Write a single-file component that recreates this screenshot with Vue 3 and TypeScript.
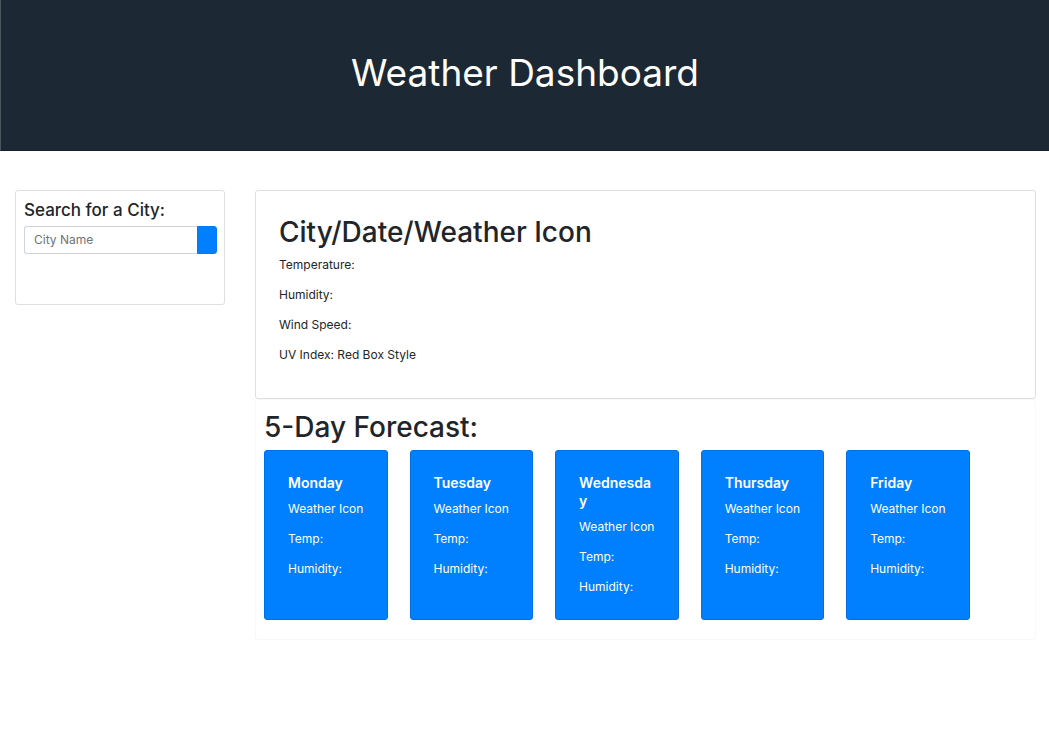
<script setup lang="ts">
import { ref } from 'vue'

const city = ref<string>('')
const days: string[] = ['Monday', 'Tuesday', 'Wednesday', 'Thursday', 'Friday']
const current: string[] = ['Temperature:', 'Humidity:', 'Wind Speed:', 'UV Index: Red Box Style']
const details: string[] = ['Weather Icon', 'Temp:', 'Humidity:']
</script>

<template>
  <div class="page">
    <header class="banner">
      <h1>Weather Dashboard</h1>
    </header>
    <div class="layout">
      <aside class="search">
        <form @submit.prevent>
          <label for="city">Search for a City:</label>
          <div class="field">
            <input id="city" v-model="city" type="text" placeholder="City Name" />
            <button type="submit" aria-label="Search"></button>
          </div>
        </form>
      </aside>
      <main class="main">
        <section class="current">
          <h2>City/Date/Weather Icon</h2>
          <p v-for="line in current" :key="line">{{ line }}</p>
        </section>
        <section class="forecast">
          <h2>5-Day Forecast:</h2>
          <div class="days">
            <article v-for="day in days" :key="day" class="day">
              <h3>{{ day }}</h3>
              <p v-for="item in details" :key="item">{{ item }}</p>
            </article>
          </div>
        </section>
      </main>
    </div>
  </div>
</template>

<style>
body {
  margin: 0;
  background: #fff;
}
</style>

<style scoped>
.page,
.page * {
  box-sizing: border-box;
}
.page {
  font-family: Inter, "Liberation Sans", sans-serif;
  font-size: 12px;
  line-height: 18px;
  color: #212529;
}
.banner {
  padding: 46px 24px 50px;
  background: #1c2833;
  border-left: 1px solid #4a555e;
  border-bottom: 1px solid #18202d;
  color: #fff;
  text-align: center;
}
h1 {
  margin: 0;
  font-size: 37px;
  line-height: 54px;
  font-weight: 400;
}
.layout {
  display: grid;
  grid-template-columns: minmax(0, 210fr) minmax(0, 781fr);
  gap: 30px;
  align-items: start;
  padding: 39px 13px 0 15px;
}
.search {
  min-height: 115px;
  padding: 8px 7px 8px 8px;
  border: 1px solid #dfdfdf;
  border-radius: 3px;
}
.search label {
  display: block;
  margin-bottom: 5px;
  font-size: 17px;
  line-height: 22px;
  font-weight: 500;
}
.field {
  display: flex;
}
.field input {
  flex: 1;
  min-width: 0;
  height: 28px;
  margin: 0;
  padding: 0 9px 2px;
  border: 1px solid #ced4da;
  border-right: 0;
  border-radius: 3px 0 0 3px;
  background: #fff;
  font: inherit;
  color: #495057;
  outline: 0;
}
.field input::placeholder {
  color: #6c757d;
  opacity: 1;
}
.field button {
  width: 20px;
  height: 28px;
  padding: 0;
  border: 1px solid #007bff;
  border-radius: 0 3px 3px 0;
  background: #0080ff;
}
.main {
  min-width: 0;
}
h2 {
  margin: 0;
  font-size: 28px;
  line-height: 36px;
  font-weight: 500;
}
p {
  margin: 0 0 12px;
}
.current {
  padding: 23px 23px 22px;
  border: 1px solid #dfdfdf;
  border-radius: 3px;
}
.current h2 {
  margin-bottom: 6px;
}
.forecast {
  padding: 9px 8px 19px;
  border: 1px solid #f8f8f9;
  border-radius: 3px;
}
.forecast h2 {
  margin-bottom: 5px;
}
.days {
  display: grid;
  grid-template-columns: repeat(5, minmax(0, 1fr));
  gap: 22px;
  width: 92.5%;
}
.day {
  padding: 23px;
  border: 1px solid #0071e2;
  border-radius: 3px;
  background: #0080ff;
  color: #fff;
}
.day h3 {
  margin: 0 0 8px;
  font-size: 14px;
  line-height: 18px;
  font-weight: 600;
  overflow-wrap: anywhere;
}
.day p {
  white-space: nowrap;
}
.day p:last-child {
  margin-bottom: 0;
}
</style>
